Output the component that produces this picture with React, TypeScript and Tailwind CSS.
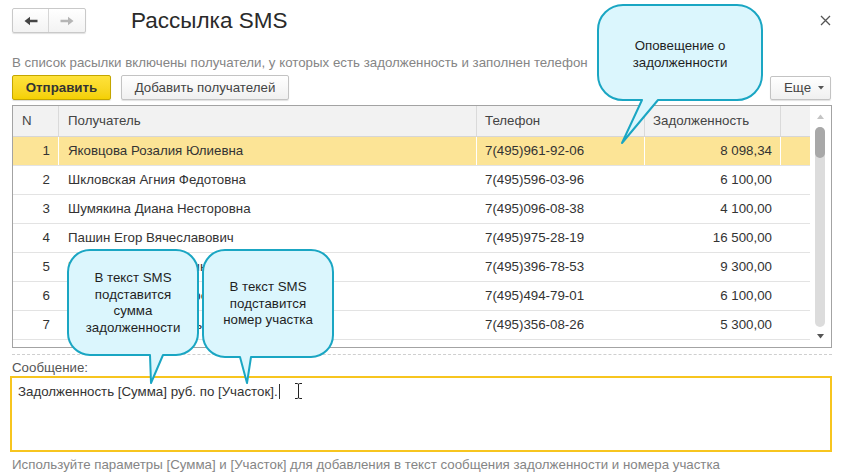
import React from "react";

const rows: [string, string, string, string][] = [
  ["1", "Яковцова Розалия Юлиевна", "7(495)961-92-06", "8 098,34"],
  ["2", "Шкловская Агния Федотовна", "7(495)596-03-96", "6 100,00"],
  ["3", "Шумякина Диана Несторовна", "7(495)096-08-38", "4 100,00"],
  ["4", "Пашин Егор Вячеславович", "7(495)975-28-19", "16 500,00"],
  ["5", "Кузнецова Ирина Геннадьевна", "7(495)396-78-53", "9 300,00"],
  ["6", "Захарова Ольга Петровна", "7(495)494-79-01", "6 100,00"],
  ["7", "Дмитриева Анна Юрьевна", "7(495)356-08-26", "5 300,00"],
];

function bubble(x: number, y: number, w: number, h: number, r: number, x1: number, x2: number, tx: number, ty: number) {
  const b = y + h;
  return `M${x + r},${y} H${x + w - r} A${r},${r} 0 0 1 ${x + w},${y + r} V${b - r} A${r},${r} 0 0 1 ${x + w - r},${b} H${x2} L${tx},${ty} L${x1},${b} H${x + r} A${r},${r} 0 0 1 ${x},${b - r} V${y + r} A${r},${r} 0 0 1 ${x + r},${y} Z`;
}

function Arrow({ dir, color }: { dir: "l" | "r"; color: string }) {
  return (
    <svg width="14" height="10" viewBox="0 0 14 10" style={{ transform: dir === "r" ? "scaleX(-1)" : undefined }}>
      <path d="M0.5 5 L6 0.8 V3.8 H13.5 V6.2 H6 V9.2 Z" fill={color} />
    </svg>
  );
}

export default function App() {
  return (
    <div className="relative w-[850px] h-[473px] overflow-hidden bg-white font-['Liberation_Sans',Arial,sans-serif] text-[#333]">
      <div className="ml-3 w-[820px] pt-2">
        {/* header */}
        <div className="flex items-center h-[25px]">
          <div className="flex h-[25px] w-[74px] rounded-[2px] border border-[#c9c9c9] bg-gradient-to-b from-white to-[#f3f3f3] shadow-[0_1px_1px_rgba(0,0,0,0.12)]">
            <div className="flex w-[36px] items-center justify-center border-r border-[#d6d6d6]">
              <Arrow dir="l" color="#444" />
            </div>
            <div className="flex flex-1 items-center justify-center">
              <Arrow dir="r" color="#b5b5b5" />
            </div>
          </div>
          <div className="ml-[45px] text-[22.5px] leading-[25px] text-[#2a2a2a]">Рассылка SMS</div>
          <div className="ml-auto mr-[1px] flex h-[12px] w-[12px] items-center justify-center">
            <svg width="11" height="11" viewBox="0 0 11 11">
              <path d="M1 1 L10 10 M10 1 L1 10" stroke="#555" strokeWidth="1.3" />
            </svg>
          </div>
        </div>

        {/* info */}
        <div className="mt-[22px] text-[13.3px] leading-[15px] text-[#858585] whitespace-nowrap">
          В список расылки включены получатели, у которых есть задолженность и заполнен телефон
        </div>

        {/* buttons */}
        <div className="mt-[5px] flex h-[25px] items-stretch">
          <div className="flex w-[99px] items-center justify-center rounded-[2px] border border-[#c4a600] bg-gradient-to-b from-[#fee23a] to-[#f4d000] text-[13.3px] font-bold text-[#333] shadow-[0_1px_1px_rgba(0,0,0,0.15)]">
            Отправить
          </div>
          <div className="ml-[10px] flex w-[168px] items-center justify-center rounded-[2px] border border-[#c3c3c3] bg-gradient-to-b from-white to-[#f0f0f0] text-[13.3px] text-[#444] shadow-[0_1px_1px_rgba(0,0,0,0.12)]">
            Добавить получателей
          </div>
          <div className="ml-auto mt-[1px] mr-[1px] flex w-[61px] items-center justify-between rounded-[2px] border border-[#c3c3c3] bg-gradient-to-b from-white to-[#f0f0f0] pl-[13px] pr-[6px] text-[13.3px] text-[#444] shadow-[0_1px_1px_rgba(0,0,0,0.12)]">
            <span>Еще</span>
            <svg width="6" height="4" viewBox="0 0 6 4"><path d="M0 0 H6 L3 3.5 Z" fill="#555" /></svg>
          </div>
        </div>

        {/* table */}
        <div className="mt-[5px] flex h-[243px] w-[820px] border border-[#a3a3a3]">
          <div className="flex w-[797px] flex-col">
            <div className="flex h-[31px] border-b border-[#d6d6d6] bg-[#f2f2f2] text-[13.3px] text-[#444]">
              <div className="flex w-[46px] items-center border-r border-[#dadada] pl-[9px]">N</div>
              <div className="flex w-[418px] items-center border-r border-[#dadada] pl-[9px]">Получатель</div>
              <div className="flex w-[168px] items-center border-r border-[#dadada] pl-[8px]">Телефон</div>
              <div className="flex w-[136px] items-center border-r border-[#dadada] pl-[8px]">Задолженность</div>
              <div className="flex-1" />
            </div>
            <div className="h-[210px] overflow-hidden">
              {rows.map((r, i) => (
                <div
                  key={i}
                  className={`flex h-[29px] border-b border-[#e3e3e3] text-[13.3px] text-[#333] ${i === 0 ? "bg-[#fce496]" : "bg-white"}`}
                >
                  <div className="flex w-[46px] items-center justify-end border-r border-white pr-[8px]">{r[0]}</div>
                  <div className="flex w-[418px] items-center border-r border-white pl-[9px]">{r[1]}</div>
                  <div className="flex w-[168px] items-center border-r border-white pl-[8px]">{r[2]}</div>
                  <div className="flex w-[136px] items-center justify-end border-r border-white pr-[8px]">{r[3]}</div>
                  <div className="flex-1" />
                </div>
              ))}
            </div>
          </div>
          <div className="flex w-[21px] flex-col items-center bg-white">
            <svg className="mt-[8px]" width="7" height="5" viewBox="0 0 7 5"><path d="M0 5 H7 L3.5 0.5 Z" fill="#c4c4c4" /></svg>
            <div className="mt-[8px] ml-[-1px] flex h-[200px] w-[10px] flex-col rounded-full bg-[#dcdcdc]">
              <div className="h-[31px] w-[10px] rounded-full bg-[#a8a8a8]" />
            </div>
            <svg className="mt-[7px] ml-[-1px]" width="7" height="5" viewBox="0 0 7 5"><path d="M0 0 H7 L3.5 4.5 Z" fill="#555" /></svg>
          </div>
        </div>

        {/* dashed */}
        <div className="mt-[6px] w-[820px] border-t border-dashed border-[#cfcfcf]" />

        <div className="mt-[5px] text-[13.3px] leading-[15px] text-[#555]">Сообщение:</div>

        <div className="ml-[-2px] mt-[1px] h-[76px] w-[822px] border-2 border-[#f7c51f] px-[6px] pt-[5px]">
          <div className="relative flex items-center text-[13.3px] leading-[15px] text-[#333]">
            <span>Задолженность [Сумма] руб. по [Участок].</span>
            <span className="ml-[1px] inline-block h-[15px] w-px bg-[#333]" />
            <svg className="ml-[14px]" width="9" height="16" viewBox="0 0 9 16">
              <path d="M1 0.5 H3.5 Q4.5 0.5 4.5 2 V14 Q4.5 15.5 3.5 15.5 H1 M8 0.5 H5.5 Q4.5 0.5 4.5 2 M8 15.5 H5.5 Q4.5 15.5 4.5 14" stroke="#222" strokeWidth="1" fill="none" />
            </svg>
          </div>
        </div>

        <div className="mt-[5px] text-[13.3px] leading-[15px] text-[#858585] whitespace-nowrap">
          Используйте параметры [Сумма] и [Участок] для добавления в текст сообщения задолженности и номера участка
        </div>
      </div>

      {/* callouts overlay */}
      <svg className="pointer-events-none absolute left-0 top-0" width="850" height="473" viewBox="0 0 850 473">
        <path d={bubble(598, 5, 164, 95, 25, 642, 658, 622, 143)} fill="#dbf6fd" stroke="#1aa6c3" strokeWidth="2" strokeLinejoin="round" />
        <path d={bubble(68, 250, 130, 105, 22, 150, 163, 151, 383)} fill="#dbf6fd" stroke="#1aa6c3" strokeWidth="2" strokeLinejoin="round" />
        <path d={bubble(203, 250, 130, 107, 22, 240, 251, 247, 383)} fill="#dbf6fd" stroke="#1aa6c3" strokeWidth="2" strokeLinejoin="round" />
      </svg>
      <div className="pointer-events-none absolute left-[598px] top-[37px] w-[164px] text-center text-[13.3px] leading-[17px] text-[#1f1f1f]">
        Оповещение о<br />задолженности
      </div>
      <div className="pointer-events-none absolute left-[68px] top-[270px] w-[130px] text-center text-[13.3px] leading-[16.5px] text-[#1f1f1f]">
        В текст SMS<br />подставится<br />сумма<br />задолженности
      </div>
      <div className="pointer-events-none absolute left-[203px] top-[279px] w-[130px] text-center text-[13.3px] leading-[16.5px] text-[#1f1f1f]">
        В текст SMS<br />подставится<br />номер участка
      </div>
    </div>
  );
}
